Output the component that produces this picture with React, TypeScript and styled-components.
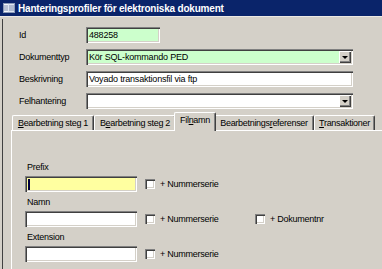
import { FC } from 'react';
import styled, { createGlobalStyle } from 'styled-components';

const GlobalStyle = createGlobalStyle`
  html, body {
    margin: 0;
    padding: 0;
    background: #d4d0c8;
  }
  body {
    font-family: "Liberation Sans", Arial, sans-serif;
    font-size: 9px;
    color: #000;
  }
`;

const Window = styled.div`
  width: 382px;
  height: 269px;
  overflow: hidden;
  background: #d4d0c8;
  display: flex;
  flex-direction: column;
`;

const TitleBar = styled.div`
  height: 16px;
  flex: none;
  background: #0a246a;
  color: #fff;
  display: flex;
  align-items: center;
  gap: 3px;
  padding-left: 3px;
  font-weight: bold;
  font-size: 10px;
  letter-spacing: -0.2px;
`;

const Frame = styled.div`
  flex: 1;
  display: flex;
  border-top: 1px solid #ece9e4;
  padding: 2px 0 0 2px;
  min-height: 0;
`;

const FormArea = styled.div`
  flex: 1;
  display: flex;
  flex-direction: column;
  border-left: 1px solid #404040;
  min-width: 0;
`;

const Fields = styled.div`
  display: flex;
  flex-direction: column;
  gap: 6px;
  padding: 8px 0 0 16px;
`;

const FieldRow = styled.div`
  display: flex;
  align-items: center;
  height: 16px;
`;

const Label = styled.span`
  width: 67px;
  flex: none;
  letter-spacing: -0.25px;
`;

const TextBox = styled.div<{ $width: number; $bg?: string }>`
  position: relative;
  width: ${(p) => p.$width}px;
  height: 16px;
  box-sizing: border-box;
  flex: none;
  background: ${(p) => p.$bg || '#fff'};
  box-shadow: inset 1px 1px 0 #808080, inset 2px 2px 0 #404040,
    inset -1px -1px 0 #fff, inset -2px -2px 0 #d4d0c8;
  padding: 0 3px;
  display: flex;
  align-items: center;
  letter-spacing: -0.2px;
  white-space: nowrap;
`;

const DropButton = styled.span`
  position: absolute;
  right: 2px;
  top: 2px;
  bottom: 2px;
  width: 12px;
  background: #d4d0c8;
  box-shadow: inset 1px 1px 0 #fff, inset -1px -1px 0 #404040, inset -2px -2px 0 #808080;
  display: flex;
  align-items: center;
  justify-content: center;

  &::after {
    content: '';
    width: 0;
    height: 0;
    border-left: 3px solid transparent;
    border-right: 3px solid transparent;
    border-top: 3px solid #000;
    margin-top: 1px;
  }
`;

const TabArea = styled.div`
  flex: 1;
  display: flex;
  flex-direction: column;
  margin-top: 3px;
  padding-left: 8px;
`;

const TabStrip = styled.div`
  display: flex;
  align-items: flex-end;
  height: 18px;
  padding-left: 1px;
  position: relative;
  z-index: 1;
`;

const Tab = styled.div<{ $width: number; $active?: boolean }>`
  width: ${(p) => p.$width}px;
  flex: none;
  box-sizing: border-box;
  height: ${(p) => (p.$active ? 19 : 15)}px;
  margin: ${(p) => (p.$active ? '0 -2px -1px -2px' : '0')};
  position: relative;
  z-index: ${(p) => (p.$active ? 2 : 1)};
  background: #d4d0c8;
  border-top: 1px solid #fff;
  border-left: 1px solid #fff;
  border-right: 1px solid #404040;
  border-radius: 2px 2px 0 0;
  box-shadow: inset -1px 0 0 #808080;
  display: flex;
  align-items: ${(p) => (p.$active ? 'flex-start' : 'center')};
  padding-top: ${(p) => (p.$active ? 2 : 0)}px;
  justify-content: center;
  letter-spacing: -0.3px;
  white-space: nowrap;

  u {
    text-decoration: underline;
    text-underline-offset: 1px;
  }
`;

const Panel = styled.div`
  flex: 1;
  margin-right: -20px;
  border-top: 1px solid #fff;
  border-left: 1px solid #fff;
  padding: 31px 0 0 13px;
  display: flex;
  flex-direction: column;
  gap: 5px;
`;

const Block = styled.div`
  display: flex;
  flex-direction: column;
  gap: 3px;
`;

const SubLabel = styled.span`
  line-height: 11px;
  padding-left: 2px;
  letter-spacing: -0.25px;
`;

const InputRow = styled.div`
  display: flex;
  align-items: center;
`;

const CheckItem = styled.label`
  display: flex;
  align-items: center;
  gap: 5px;
  width: 110px;
  flex: none;
  letter-spacing: -0.25px;

  &:first-of-type {
    margin-left: 8px;
  }
`;

const CheckBox = styled.span`
  width: 10px;
  height: 10px;
  box-sizing: border-box;
  flex: none;
  background: #fff;
  box-shadow: inset 1px 1px 0 #808080, inset 2px 2px 0 #404040,
    inset -1px -1px 0 #fff, inset -2px -2px 0 #d4d0c8;
`;

const Caret = styled.span`
  width: 2px;
  height: 11px;
  background: #000040;
`;

const FormIcon: FC = () => (
  <svg width="12" height="10" viewBox="0 0 12 10">
    <rect x="0" y="0" width="12" height="10" fill="#dfe6f2" />
    <rect x="0.5" y="0.5" width="11" height="9" fill="none" stroke="#8a9ab8" />
    <rect x="1" y="1" width="4" height="8" fill="#f4f6fa" />
    <path d="M6 3h5M6 5h5M6 7h5M1 3h4M1 5h4M1 7h4" stroke="#7f8fb0" strokeWidth="1" />
  </svg>
);

const Check: FC<{ text: string }> = ({ text }) => (
  <CheckItem>
    <CheckBox />
    {text}
  </CheckItem>
);

const App: FC = () => (
  <Window>
    <GlobalStyle />
    <TitleBar>
      <FormIcon />
      Hanteringsprofiler för elektroniska dokument
    </TitleBar>
    <Frame>
      <FormArea>
        <Fields>
          <FieldRow>
            <Label>Id</Label>
            <TextBox $width={74} $bg="#ccffcc">488258</TextBox>
          </FieldRow>
          <FieldRow>
            <Label>Dokumenttyp</Label>
            <TextBox $width={267} $bg="#ccffcc">
              Kör SQL-kommando PED
              <DropButton />
            </TextBox>
          </FieldRow>
          <FieldRow>
            <Label>Beskrivning</Label>
            <TextBox $width={267}>Voyado transaktionsfil via ftp</TextBox>
          </FieldRow>
          <FieldRow>
            <Label>Felhantering</Label>
            <TextBox $width={267}>
              <DropButton />
            </TextBox>
          </FieldRow>
        </Fields>
        <TabArea>
          <TabStrip>
            <Tab $width={82}>
              <span><u>B</u>earbetning steg 1</span>
            </Tab>
            <Tab $width={82}>
              <span>B<u>e</u>arbetning steg 2</span>
            </Tab>
            <Tab $width={42} $active>
              <span>Fil<u>n</u>amn</span>
            </Tab>
            <Tab $width={100}>
              <span>Bearbetnings<u>r</u>eferenser</span>
            </Tab>
            <Tab $width={61}>
              <span><u>T</u>ransaktioner</span>
            </Tab>
          </TabStrip>
          <Panel>
            <Block>
              <SubLabel>Prefix</SubLabel>
              <InputRow>
                <TextBox $width={112} $bg="#ffffa0">
                  <Caret />
                </TextBox>
                <Check text="+ Nummerserie" />
              </InputRow>
            </Block>
            <Block>
              <SubLabel>Namn</SubLabel>
              <InputRow>
                <TextBox $width={112} />
                <Check text="+ Nummerserie" />
                <Check text="+ Dokumentnr" />
              </InputRow>
            </Block>
            <Block>
              <SubLabel>Extension</SubLabel>
              <InputRow>
                <TextBox $width={112} />
                <Check text="+ Nummerserie" />
              </InputRow>
            </Block>
          </Panel>
        </TabArea>
      </FormArea>
    </Frame>
  </Window>
);

export default App;
